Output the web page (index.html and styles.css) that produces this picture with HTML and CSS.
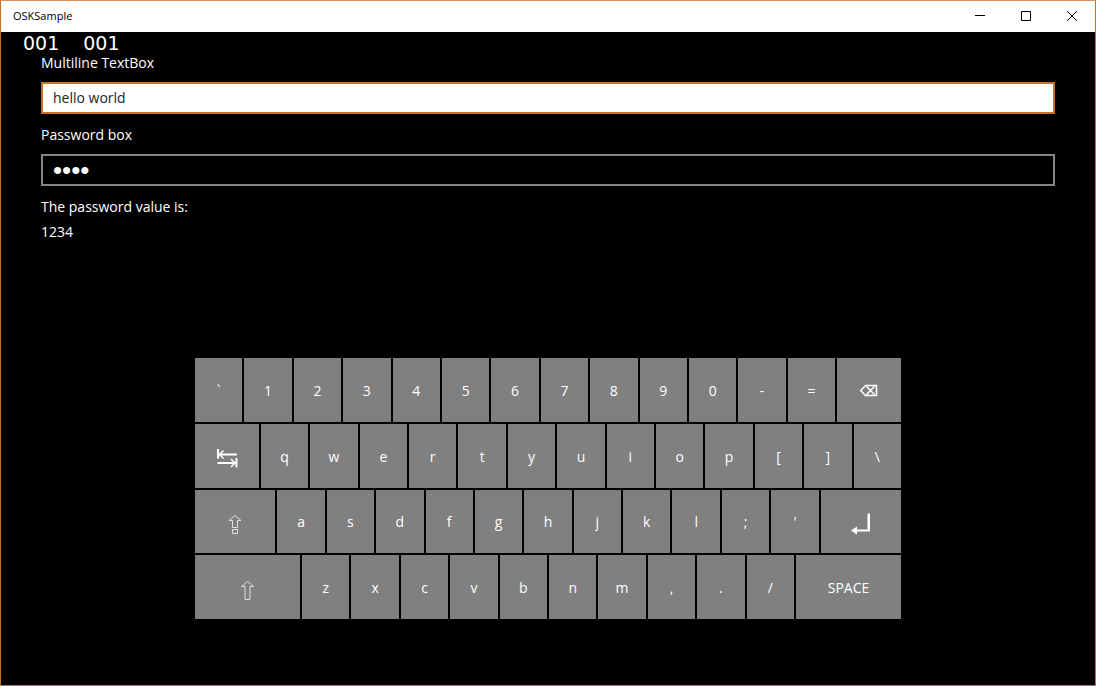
FILE: index.html
```
<!DOCTYPE html>
<html lang="en">
<head>
<meta charset="utf-8">
<meta name="viewport" content="width=device-width, initial-scale=1">
<title>OSKSample</title>
<link rel="stylesheet" href="styles.css">
</head>
<body>
<div class="window">
  <header class="titlebar">
    <h1 class="title">OSKSample</h1>
    <div class="window-buttons">
      <button class="window-button" aria-label="Minimize"><svg width="12" height="12" viewBox="0 0 12 12"><path d="M1 5.500h10"/></svg></button>
      <button class="window-button" aria-label="Maximize"><svg width="12" height="12" viewBox="0 0 12 12"><path d="M1.500 1.500h9v9h-9z"/></svg></button>
      <button class="window-button" aria-label="Close"><svg width="12" height="12" viewBox="0 0 12 12"><path d="M1 1l10 10M11 1L1 11"/></svg></button>
    </div>
  </header>
  <main class="page">
    <div class="counters"><span>001</span><span>001</span></div>
    <form class="form">
      <label class="label" for="text">Multiline TextBox</label>
      <input class="field field-active" id="text" type="text" value="hello world">
      <label class="label" for="password">Password box</label>
      <input class="field field-password" id="password" type="password" value="1234">
      <p class="label">The password value is:</p>
      <p class="value">1234</p>
    </form>
    <div class="keyboard">
      <button class="key">`</button>
      <button class="key">1</button>
      <button class="key">2</button>
      <button class="key">3</button>
      <button class="key">4</button>
      <button class="key">5</button>
      <button class="key">6</button>
      <button class="key">7</button>
      <button class="key">8</button>
      <button class="key">9</button>
      <button class="key">0</button>
      <button class="key">-</button>
      <button class="key">=</button>
      <button class="key key-medium" aria-label="Backspace"><svg width="28" height="28" viewBox="0 0 28 28"><path class="line bright" d="M5.700 14.500L10.500 9.500H21.500V19.500H10.500zM11.500 10.500l8 8M19.500 10.500l-8 8"/></svg></button>

      <button class="key key-medium" aria-label="Tab"><svg width="28" height="28" viewBox="0 0 28 28"><path class="bold" d="M5 7v9.500M6 12.500H24M23.500 16v9.500M4.500 21H23"/><path class="line bright" d="M10.500 8.500L6.500 12.500L10.500 16.500M18 17L22 21L18 25"/></svg></button>
      <button class="key">q</button>
      <button class="key">w</button>
      <button class="key">e</button>
      <button class="key">r</button>
      <button class="key">t</button>
      <button class="key">y</button>
      <button class="key">u</button>
      <button class="key">i</button>
      <button class="key">o</button>
      <button class="key">p</button>
      <button class="key">[</button>
      <button class="key">]</button>
      <button class="key">\</button>

      <button class="key key-large" aria-label="Caps Lock"><svg width="28" height="28" viewBox="0 0 28 28"><path class="line" d="M14 8.500L20 13.500H16.500V20.500H11.500V13.500H8zM11.500 22.500h5v4h-5z"/></svg></button>
      <button class="key">a</button>
      <button class="key">s</button>
      <button class="key">d</button>
      <button class="key">f</button>
      <button class="key">g</button>
      <button class="key">h</button>
      <button class="key">j</button>
      <button class="key">k</button>
      <button class="key">l</button>
      <button class="key">;</button>
      <button class="key">'</button>
      <button class="key key-large" aria-label="Enter"><svg width="28" height="28" viewBox="0 0 28 28"><path class="solid" d="M20.500 6.500H23V24.500H10V27.500L4 23.500L10 19.500V22.500H20.500z"/></svg></button>

      <button class="key key-wide" aria-label="Shift"><svg width="28" height="28" viewBox="0 0 28 28"><path class="line" d="M13.500 8.500L19.500 13.500H16V26.500H11V13.500H7.500z"/></svg></button>
      <button class="key">z</button>
      <button class="key">x</button>
      <button class="key">c</button>
      <button class="key">v</button>
      <button class="key">b</button>
      <button class="key">n</button>
      <button class="key">m</button>
      <button class="key">,</button>
      <button class="key">.</button>
      <button class="key">/</button>
      <button class="key key-wide">SPACE</button>
    </div>
  </main>
</div>
</body>
</html>
```
FILE: styles.css
```
* {
  box-sizing: border-box;
}

body {
  margin: 0;
  background: #000;
  color: #fff;
  font: 14px/20px "Open Sans", "Noto Sans", sans-serif;
}

button,
input {
  font: inherit;
}

.window {
  display: flex;
  flex-direction: column;
  min-height: 100vh;
  border: 1px solid #cb701f;
  border-top-color: #d99060;
}

.titlebar {
  display: flex;
  justify-content: space-between;
  height: 31px;
  padding-left: 12px;
  background: #fff;
  color: #000;
}

.title {
  margin: 0;
  font-size: 11px;
  font-weight: 400;
  line-height: 30px;
}

.window-buttons {
  display: flex;
}

.window-button {
  display: flex;
  align-items: center;
  justify-content: center;
  width: 46px;
  padding: 0 0 1px;
  border: 0;
  background: none;
}

.window-button path {
  fill: none;
  stroke: #000;
}

.page {
  position: relative;
  display: flex;
  flex: 1;
  flex-direction: column;
  justify-content: space-between;
  gap: 24px;
  padding: 21px 40px 66px;
}

.counters {
  position: absolute;
  top: 1px;
  left: 22px;
  display: flex;
  gap: 24px;
  font: 19px/20px "DejaVu Sans", sans-serif;
}

.form {
  display: flex;
  flex-direction: column;
}

.label,
.value {
  margin: 0;
}

.field {
  height: 32px;
  margin: 9px 0 11px;
  padding: 0 10px 2px;
  border: 2px solid #858585;
  border-radius: 0;
  outline: 0;
  background: #000;
  color: #fff;
}

.field-active {
  border-color: #c8712b;
  background: #fff;
  color: #222;
}

.field-password {
  padding-bottom: 0;
  font: 26px/28px "Liberation Sans", sans-serif;
}

.value {
  margin-top: 5px;
}

.keyboard {
  display: grid;
  grid-template-columns: repeat(86, minmax(0, 1fr));
  grid-auto-rows: 1fr;
  gap: 2px;
  width: 100%;
  max-width: 706px;
  height: 261px;
  margin: 0 auto;
}

.key {
  display: flex;
  grid-column: span 6;
  align-items: center;
  justify-content: center;
  padding: 2px 0 0;
  border: 0;
  background: #808080;
  color: #fff;
}

.key svg {
  margin-bottom: 2px;
}

.key-medium {
  grid-column: span 8;
}

.key-large {
  grid-column: span 10;
}

.key-wide {
  grid-column: span 13;
}

.line,
.bold {
  fill: none;
  stroke: #e0e0e0;
}

.line.bright {
  stroke: #fff;
  stroke-width: 1.5;
}

.bold {
  stroke: #fff;
  stroke-width: 2;
}

.solid {
  fill: #fff;
}
```
